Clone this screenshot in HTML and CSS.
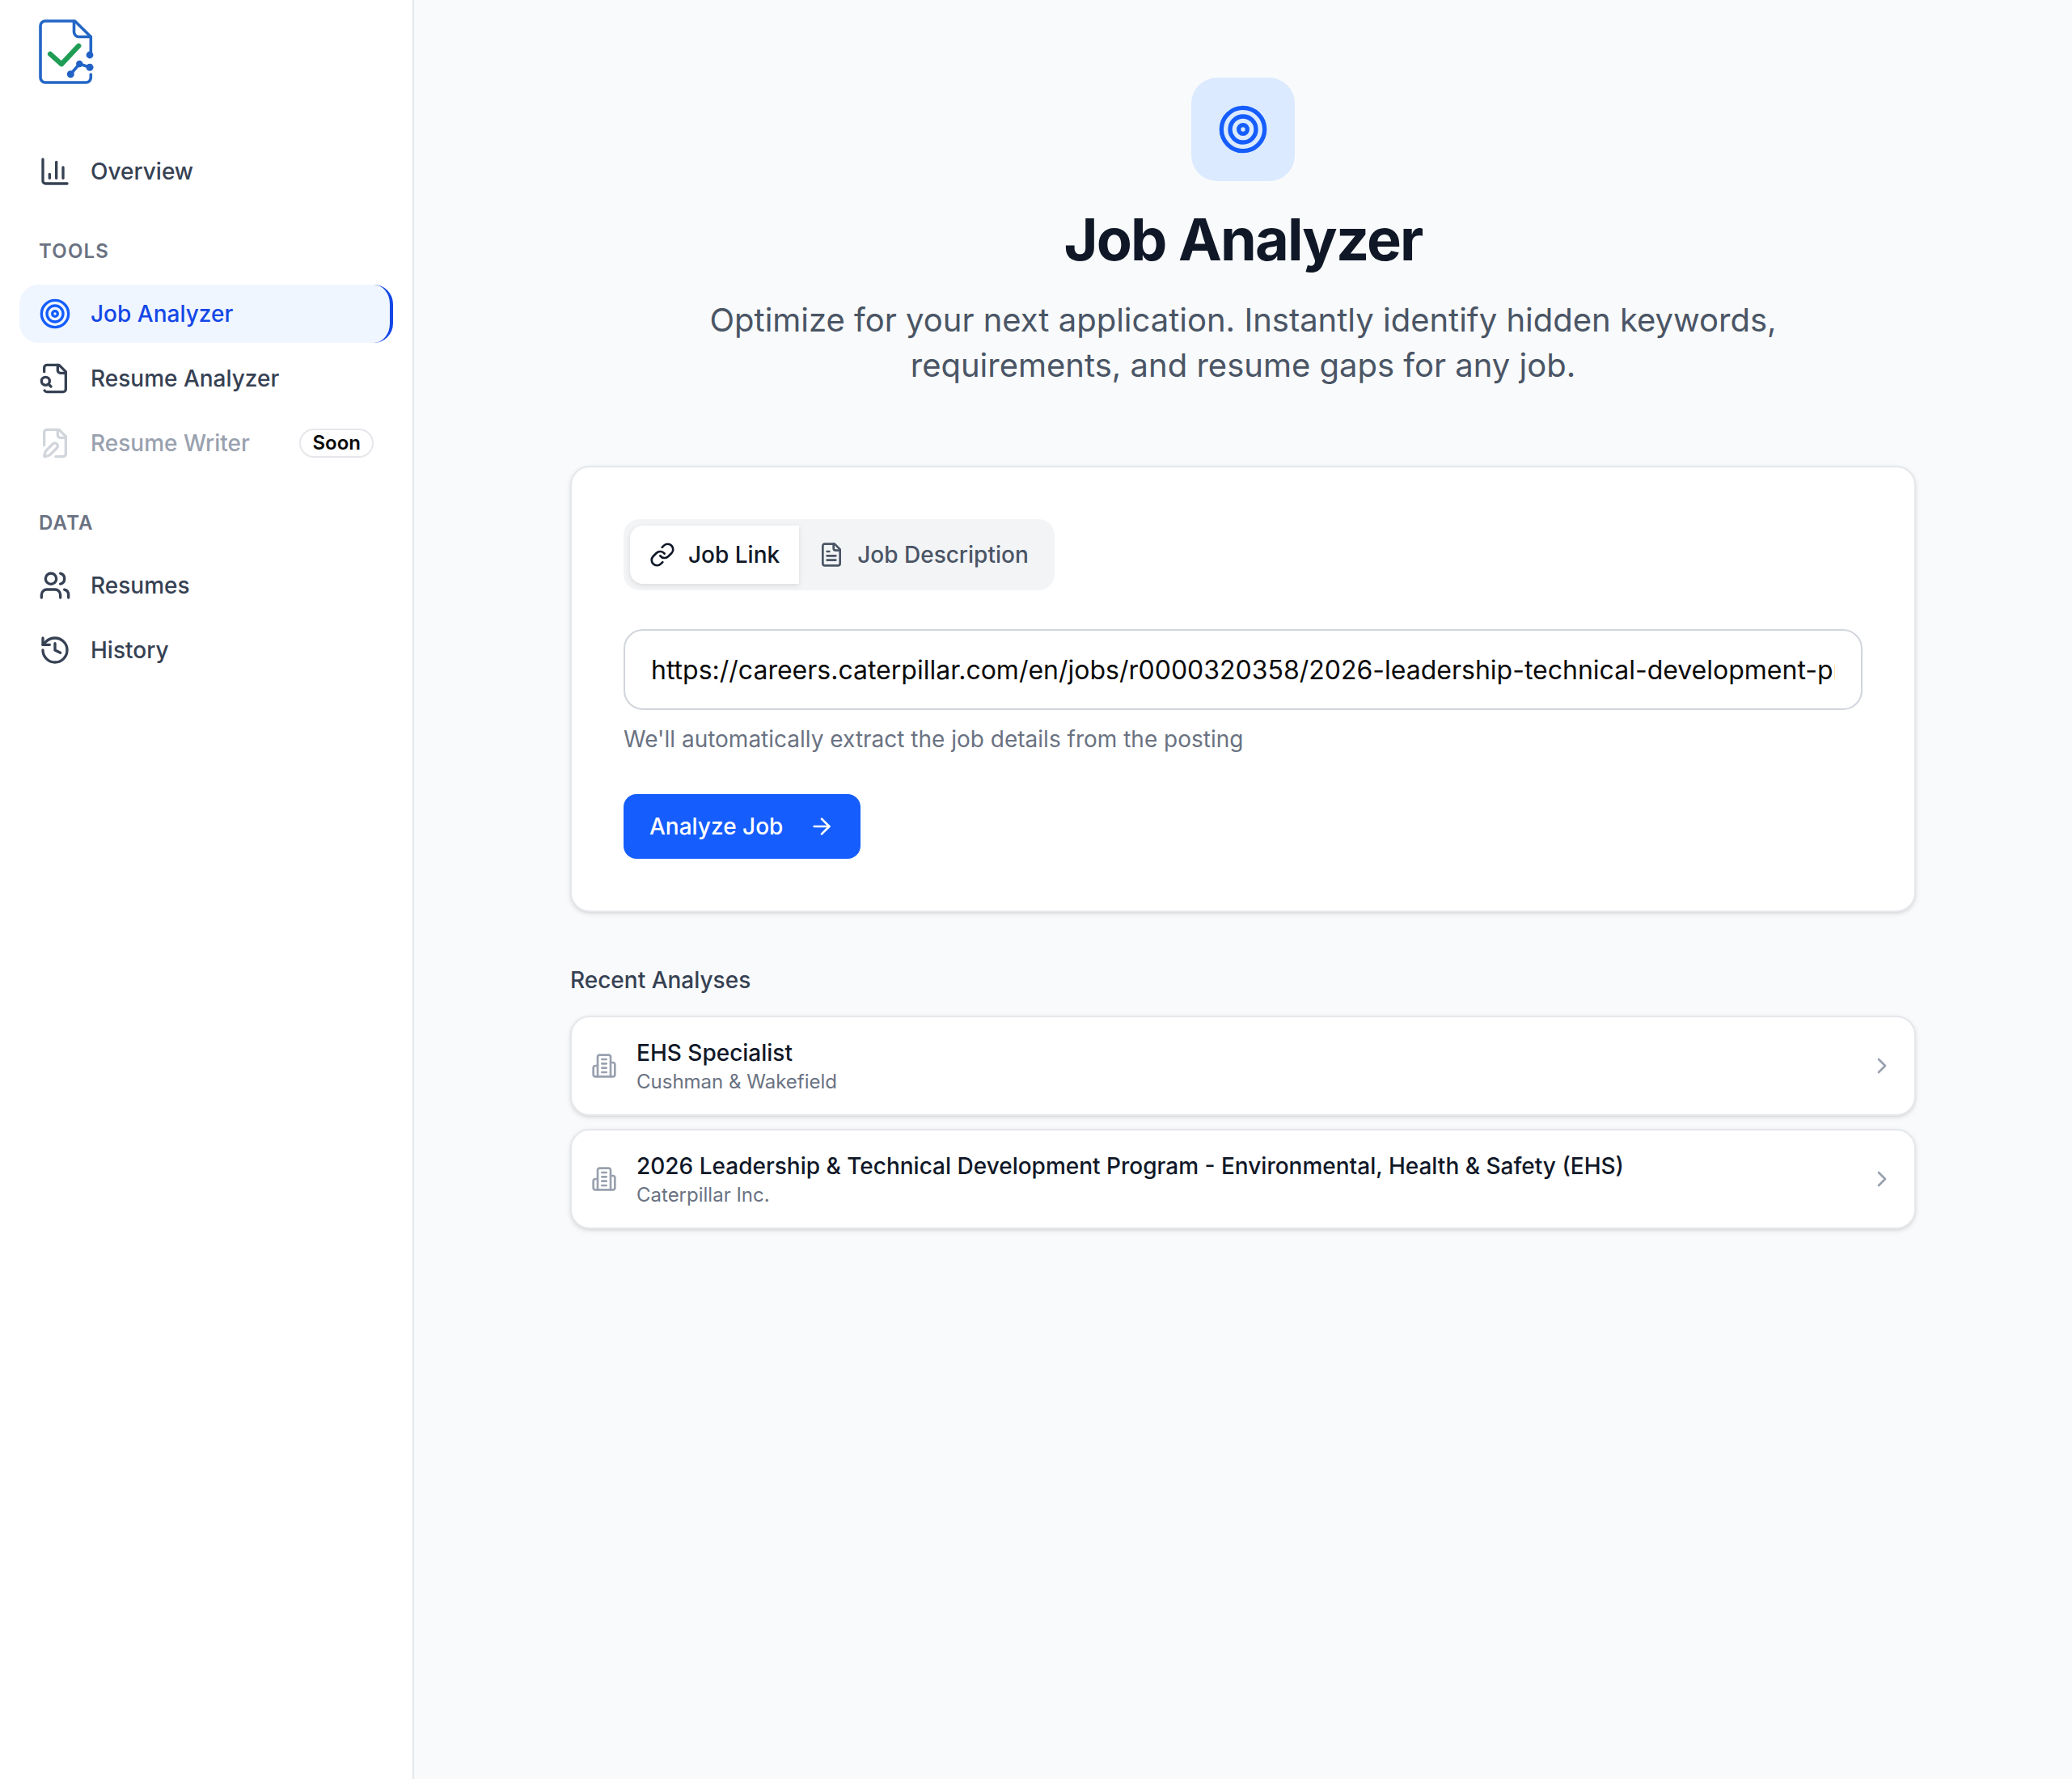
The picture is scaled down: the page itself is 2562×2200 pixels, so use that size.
FILE: index.html
```html
<!DOCTYPE html>
<html lang="en">
<head>
<meta charset="utf-8">
<title>Job Analyzer</title>
<link rel="stylesheet" href="styles.css">
</head>
<body>
<div class="app">
  <aside class="sidebar">
    <div class="logo-wrap">
      <svg class="logo" viewBox="0 0 70 80" fill="none" aria-label="Logo">
        <g stroke="#2366c6" stroke-width="3.6" stroke-linejoin="round" stroke-linecap="round">
          <path d="M64.3 68v4a6 6 0 0 1-6 6H8a6 6 0 0 1-6-6V8a6 6 0 0 1 6-6h36.5L64.3 21.5V44"/>
          <path d="M43.5 3v12.5a6 6 0 0 0 6 6h14.8"/>
          <path d="M39.3 67.7 50.3 55 63 59.3"/>
        </g>
        <g fill="#2262c6">
          <circle cx="63" cy="44" r="4.4"/>
          <circle cx="39.3" cy="67.7" r="4.5"/>
          <circle cx="50.3" cy="55" r="4.2"/>
          <circle cx="63" cy="59.3" r="4.5"/>
        </g>
        <path d="M14 42.7 28 55.3 49.3 32.7" stroke="#1f9d55" stroke-width="6.2" stroke-linejoin="round"/>
      </svg>
    </div>
    <nav class="nav">
      <a class="nav-item">
        <svg class="icon-nav" viewBox="0 0 24 24"><path d="M3 3v16a2 2 0 0 0 2 2h16"/><path d="M18 17V9"/><path d="M13 17V5"/><path d="M8 17v-3"/></svg>
        <span>Overview</span>
      </a>
      <div class="nav-heading nav-heading-tools">TOOLS</div>
      <a class="nav-item is-active">
        <svg class="icon-nav" viewBox="0 0 24 24"><circle cx="12" cy="12" r="10"/><circle cx="12" cy="12" r="6"/><circle cx="12" cy="12" r="2"/></svg>
        <span>Job Analyzer</span>
      </a>
      <a class="nav-item">
        <svg class="icon-nav" viewBox="0 0 24 24"><path d="M14 2v4a2 2 0 0 0 2 2h4"/><path d="M4.268 21a2 2 0 0 0 1.727 1H18a2 2 0 0 0 2-2V7l-5-5H6a2 2 0 0 0-2 2v3"/><path d="m9 18-1.5-1.5"/><circle cx="5" cy="14" r="3"/></svg>
        <span>Resume Analyzer</span>
      </a>
      <a class="nav-item is-disabled">
        <svg class="icon-nav" viewBox="0 0 24 24"><path d="M12.5 22H18a2 2 0 0 0 2-2V7l-5-5H6a2 2 0 0 0-2 2v9.5"/><path d="M14 2v4a2 2 0 0 0 2 2h4"/><path d="M13.378 15.626a1 1 0 1 0-3.004-3.004l-5.01 5.012a2 2 0 0 0-.506.854l-.837 2.87a.5.5 0 0 0 .62.62l2.87-.837a2 2 0 0 0 .854-.506z"/></svg>
        <span>Resume Writer</span>
        <span class="badge">Soon</span>
      </a>
      <div class="nav-heading nav-heading-data">DATA</div>
      <a class="nav-item">
        <svg class="icon-nav" viewBox="0 0 24 24"><path d="M16 21v-2a4 4 0 0 0-4-4H6a4 4 0 0 0-4 4v2"/><circle cx="9" cy="7" r="4"/><path d="M22 21v-2a4 4 0 0 0-3-3.87"/><path d="M16 3.13a4 4 0 0 1 0 7.75"/></svg>
        <span>Resumes</span>
      </a>
      <a class="nav-item">
        <svg class="icon-nav" viewBox="0 0 24 24"><path d="M3 12a9 9 0 1 0 9-9 9.75 9.75 0 0 0-6.74 2.74L3 8"/><path d="M3 3v5h5"/><path d="M12 7v5l4 2"/></svg>
        <span>History</span>
      </a>
    </nav>
  </aside>

  <main class="main">
    <div class="hero-icon">
      <svg class="icon-hero" viewBox="0 0 24 24"><circle cx="12" cy="12" r="10"/><circle cx="12" cy="12" r="6"/><circle cx="12" cy="12" r="2"/></svg>
    </div>
    <h1 class="title">Job Analyzer</h1>
    <p class="subtitle">Optimize for your next application. Instantly identify hidden keywords,<br>requirements, and resume gaps for any job.</p>

    <section class="card">
      <div class="tabs">
        <button class="tab is-selected" type="button">
          <svg class="icon-sm" viewBox="0 0 24 24"><path d="M10 13a5 5 0 0 0 7.54.54l3-3a5 5 0 0 0-7.07-7.07l-1.72 1.71"/><path d="M14 11a5 5 0 0 0-7.54-.54l-3 3a5 5 0 0 0 7.07 7.07l1.71-1.71"/></svg>
          Job Link
        </button>
        <button class="tab" type="button">
          <svg class="icon-sm" viewBox="0 0 24 24"><path d="M15 2H6a2 2 0 0 0-2 2v16a2 2 0 0 0 2 2h12a2 2 0 0 0 2-2V7Z"/><path d="M14 2v4a2 2 0 0 0 2 2h4"/><path d="M10 9H8"/><path d="M16 13H8"/><path d="M16 17H8"/></svg>
          Job Description
        </button>
      </div>
      <input class="url-input" type="text" value="https://careers.caterpillar.com/en/jobs/r0000320358/2026-leadership-technical-development-program-environmental-health-and-safety-ehs/">
      <p class="hint">We'll automatically extract the job details from the posting</p>
      <button class="analyze" type="button">
        Analyze Job
        <svg class="icon-sm" viewBox="0 0 24 24"><path d="M5 12h14"/><path d="m12 5 7 7-7 7"/></svg>
      </button>
    </section>

    <section class="recent">
      <h2 class="recent-title">Recent Analyses</h2>
      <div class="recent-list">
        <a class="recent-row">
          <svg class="icon-sm icon-muted" viewBox="0 0 24 24"><path d="M6 22V4a2 2 0 0 1 2-2h8a2 2 0 0 1 2 2v18Z"/><path d="M6 12H4a2 2 0 0 0-2 2v6a2 2 0 0 0 2 2h2"/><path d="M18 9h2a2 2 0 0 1 2 2v9a2 2 0 0 1-2 2h-2"/><path d="M10 6h4"/><path d="M10 10h4"/><path d="M10 14h4"/><path d="M10 18h4"/></svg>
          <div class="recent-text">
            <div class="recent-name">EHS Specialist</div>
            <div class="recent-company">Cushman &amp; Wakefield</div>
          </div>
          <svg class="icon-sm icon-muted" viewBox="0 0 24 24"><path d="m9 18 6-6-6-6"/></svg>
        </a>
        <a class="recent-row">
          <svg class="icon-sm icon-muted" viewBox="0 0 24 24"><path d="M6 22V4a2 2 0 0 1 2-2h8a2 2 0 0 1 2 2v18Z"/><path d="M6 12H4a2 2 0 0 0-2 2v6a2 2 0 0 0 2 2h2"/><path d="M18 9h2a2 2 0 0 1 2 2v9a2 2 0 0 1-2 2h-2"/><path d="M10 6h4"/><path d="M10 10h4"/><path d="M10 14h4"/><path d="M10 18h4"/></svg>
          <div class="recent-text">
            <div class="recent-name">2026 Leadership &amp; Technical Development Program - Environmental, Health &amp; Safety (EHS)</div>
            <div class="recent-company">Caterpillar Inc.</div>
          </div>
          <svg class="icon-sm icon-muted" viewBox="0 0 24 24"><path d="m9 18 6-6-6-6"/></svg>
        </a>
      </div>
    </section>
  </main>
</div>
</body>
</html>
```

FILE: styles.css
```css
* { box-sizing: border-box; }

html, body {
  margin: 0;
  padding: 0;
  height: 100%;
}

body {
  font-family: Inter, "Liberation Sans", sans-serif;
  background: #f9fafb;
  color: #101828;
}

svg {
  fill: none;
  stroke: currentColor;
  stroke-linecap: round;
  stroke-linejoin: round;
  flex-shrink: 0;
}

.app {
  display: flex;
  min-height: 2200px;
}

/* Sidebar */
.sidebar {
  width: 512px;
  flex-shrink: 0;
  background: #ffffff;
  border-right: 2px solid #e5e7eb;
  padding: 24px 24px 0;
}

.logo-wrap {
  padding-left: 24px;
  height: 80px;
  margin-bottom: 72px;
}

.logo {
  display: block;
  width: 70px;
  height: 80px;
  stroke: none;
}

.nav {
  display: flex;
  flex-direction: column;
  gap: 8px;
  width: 462px;
}

.nav-item {
  display: flex;
  align-items: center;
  gap: 24px;
  height: 72px;
  padding: 0 20px 0 24px;
  border-right: 4px solid transparent;
  border-radius: 24px;
  font-size: 28px;
  font-weight: 500;
  line-height: 40px;
  color: #364153;
}

.nav-item.is-active {
  background: #eff6ff;
  border-right-color: #1447e6;
  color: #1447e6;
}

.nav-item.is-active .icon-nav {
  color: #155dfc;
}

.nav-item.is-disabled {
  color: #99a1af;
}

.nav-item.is-disabled .icon-nav {
  color: #d1d5dc;
}

.icon-nav {
  width: 40px;
  height: 40px;
  stroke-width: 2;
}

.badge {
  margin-left: auto;
  height: 36px;
  padding: 0 14px;
  border: 2px solid #e5e7eb;
  border-radius: 18px;
  background: #ffffff;
  color: #0a0a0a;
  font-size: 24px;
  font-weight: 600;
  line-height: 32px;
}

.nav-heading {
  padding-left: 24px;
  font-size: 24px;
  font-weight: 600;
  line-height: 32px;
  letter-spacing: 1.2px;
  color: #6a7282;
}

.nav-heading-tools { margin: 39px 0 17px; }
.nav-heading-data { margin: 39px 0 17px; }

/* Main */
.main {
  flex: 1;
  display: flex;
  flex-direction: column;
  align-items: center;
  padding-top: 96px;
}

.hero-icon {
  width: 128px;
  height: 128px;
  border-radius: 32px;
  background: #dbeafe;
  color: #155dfc;
  display: flex;
  align-items: center;
  justify-content: center;
}

.icon-hero {
  width: 64px;
  height: 64px;
  stroke-width: 2;
}

.title {
  margin: 32px 0 0;
  font-size: 72px;
  line-height: 80px;
  font-weight: 700;
  letter-spacing: -1.8px;
  color: #101828;
}

.subtitle {
  margin: 32px 0 0;
  font-size: 40px;
  line-height: 56px;
  font-weight: 400;
  text-align: center;
  color: #4a5565;
}

.card {
  width: 1664px;
  margin-top: 96px;
  padding: 64px;
  background: #ffffff;
  border: 2px solid #e5e7eb;
  border-radius: 24px;
  box-shadow: 0 2px 6px rgba(0, 0, 0, 0.1), 0 2px 4px -2px rgba(0, 0, 0, 0.1);
}

.tabs {
  display: inline-flex;
  padding: 8px;
  border-radius: 20px;
  background: #f3f4f6;
  vertical-align: top;
}

.tab {
  display: flex;
  align-items: center;
  gap: 16px;
  height: 72px;
  padding: 0 24px;
  border: 0;
  background: transparent;
  font-family: inherit;
  font-size: 28px;
  font-weight: 500;
  line-height: 40px;
  color: #4a5565;
}

.tab.is-selected {
  background: #ffffff;
  color: #101828;
  border-radius: 16px 0 0 16px;
  box-shadow: 0 2px 6px rgba(0, 0, 0, 0.1);
}

.icon-sm {
  width: 32px;
  height: 32px;
  stroke-width: 2;
}

.icon-muted {
  color: #99a1af;
}

.url-input {
  display: block;
  width: 100%;
  height: 100px;
  margin-top: 48px;
  padding: 0 32px;
  border: 2px solid #d1d5dc;
  border-radius: 24px;
  background: #ffffff;
  font-family: inherit;
  font-size: 32px;
  color: #0a0a0a;
  outline: none;
}

.hint {
  margin: 16px 0 0;
  font-size: 28px;
  line-height: 40px;
  color: #6a7282;
}

.analyze {
  display: flex;
  align-items: center;
  gap: 32px;
  height: 80px;
  margin-top: 48px;
  padding: 0 32px;
  border: 0;
  border-radius: 16px;
  background: #155dfc;
  font-family: inherit;
  font-size: 28px;
  font-weight: 500;
  color: #ffffff;
}

/* Recent */
.recent {
  width: 1664px;
  margin-top: 64px;
}

.recent-title {
  margin: 0 0 24px;
  font-size: 28px;
  line-height: 40px;
  font-weight: 500;
  color: #364153;
}

.recent-list {
  display: flex;
  flex-direction: column;
  gap: 16px;
}

.recent-row {
  display: flex;
  align-items: center;
  gap: 24px;
  padding: 24px;
  background: #ffffff;
  border: 2px solid #e5e7eb;
  border-radius: 24px;
  box-shadow: 0 2px 6px rgba(0, 0, 0, 0.1), 0 2px 4px -2px rgba(0, 0, 0, 0.1);
}

.recent-text {
  flex: 1;
  min-width: 0;
}

.recent-name {
  font-size: 28px;
  line-height: 40px;
  font-weight: 500;
  color: #101828;
}

.recent-company {
  font-size: 24px;
  line-height: 32px;
  color: #6a7282;
}
```
